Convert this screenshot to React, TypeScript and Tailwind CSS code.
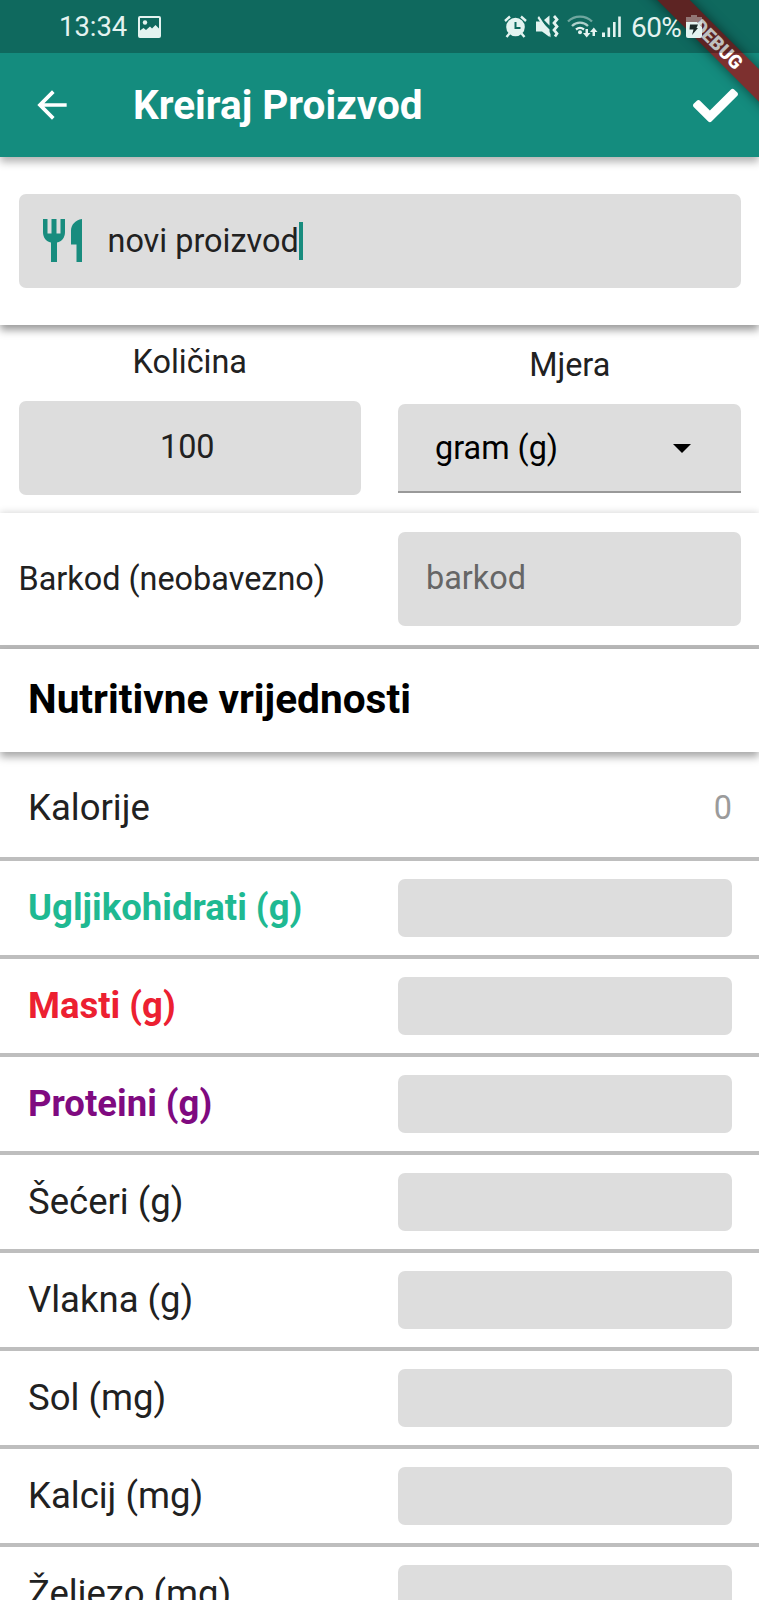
import React from "react";
import { MdArrowBack } from "react-icons/md";
import { FaCheck } from "react-icons/fa";

const nutrients = [
  { label: "Ugljikohidrati (g)", style: "font-bold text-[#1fb992]" },
  { label: "Masti (g)", style: "font-bold text-[#ec2031]" },
  { label: "Proteini (g)", style: "font-bold text-[#7f0a80]" },
  { label: "Šećeri (g)", style: "text-[#212121]" },
  { label: "Vlakna (g)", style: "text-[#212121]" },
  { label: "Sol (mg)", style: "text-[#212121]" },
  { label: "Kalcij (mg)", style: "text-[#212121]" },
  { label: "Željezo (mg)", style: "text-[#212121]" },
];

function StatusBar() {
  return (
    <div className="relative z-30 flex h-[53px] items-center bg-black/25 text-[#e4f3f0]">
      <span className="ml-[59px] w-[69px] pt-[2px] text-[27.4px] leading-none">13:34</span>
      <svg className="ml-[10px] shrink-0" width="23" height="22" viewBox="0 0 23 22">
        <path fill="currentColor" fillRule="evenodd" d="M2 0h19a2 2 0 0 1 2 2v18a2 2 0 0 1-2 2H2a2 2 0 0 1-2-2V2a2 2 0 0 1 2-2Zm0 2v12.500l3.500-2.500 2.500 2 4-3.500 2 2 3.500-3.500 3.500 3.500V2Z" />
        <circle cx="7" cy="6.500" r="2.200" fill="currentColor" />
      </svg>
      <svg className="ml-[343px] shrink-0" width="128" height="26" viewBox="0 0 128 26">
        <circle cx="11.5" cy="13" r="9.3" fill="currentColor" />
        <path fill="none" stroke="currentColor" strokeWidth="2.4" d="M1 7 6 2.500M22 7 17 2.500M5.500 19.500 2.500 23M17.500 19.500l3 3.500" />
        <path fill="none" stroke="#0e695e" strokeWidth="2" d="M11.500 8v6h5" />
        <path fill="currentColor" d="M32 7.500h5.500l8 8V23L38 17.500h-6ZM40 6l5.500-4.500V11.500Z" />
        <path fill="currentColor" d="m35 2 11.500 18v3.500L33.500 4Z" />
        <path fill="none" stroke="currentColor" strokeWidth="2.700" d="m50 2 3 3.500-3 3.500 3 3.500-3 3.500 3 3.500-2 3" />
        <g fill="none" stroke="currentColor" strokeWidth="2.300">
          <path opacity=".45" d="M64 7.500C70.500 1 81.500 1 88 7.500" />
          <path opacity=".75" d="M68 12c4.500-4.500 11.500-4.500 16 0" />
          <path d="M72 15.500c2.500-2 5.500-2 8 0" />
        </g>
        <circle cx="76" cy="18.300" r="2" fill="currentColor" />
        <path fill="currentColor" d="M81.500 15h2.500v4h2.500l-3.800 4.500L79 19h2.500ZM88.500 22H91v-4h2.500L89.800 13.500 86 18h2.500Z" />
        <path fill="currentColor" d="M98 18.500h3V23h-3ZM103.500 13.500h2.600V23h-2.600ZM109 8h2.600v15H109ZM114.200 2.500h2.600V23h-2.600Z" />
      </svg>
      <span className="-ml-[1px] w-[55px] pt-[2px] text-[28px] leading-none tracking-[-0.6px]">60%</span>
      <svg className="shrink-0" width="17" height="24" viewBox="0 0 17 24">
        <path fill="currentColor" opacity=".4" d="M5 0h6v2h5v5H0V2h5Z" />
        <path fill="currentColor" d="M0 7h11l5 5v9a2 2 0 0 1-2 2H2a2 2 0 0 1-2-2Z" />
        <path fill="currentColor" opacity=".6" d="M11 7h5v5Z" />
        <path fill="#1c2b29" d="M4 9.500h8l-1.500 3.500H12l-6 7 1.500-5.500H3.500Z" />
      </svg>
    </div>
  );
}

function DebugRibbon() {
  return (
    <div className="absolute left-[618px] top-[33px] z-20 h-[23px] w-[200px] rotate-45 bg-[#7d302f] text-center text-[19px] font-black leading-[23px] text-white shadow-[0_0_12px_rgba(0,0,0,0.5)]">
      DEBUG
    </div>
  );
}

function Cutlery() {
  return (
    <svg width="40" height="44" viewBox="0 0 40 44" className="text-[#188c7e]">
      <path fill="currentColor" d="M0 0h4.500v14.500h4V0h5v14.500h4V0H22v13c0 5.500-3 9.500-8 10.500V43H8V23.500C3 22.500 0 18.500 0 13ZM39 0v43h-5.500V25.500H28V12C28 6 32 1 39 0Z" />
    </svg>
  );
}

export default function App() {
  return (
    <div className="h-[1600px] w-[759px] overflow-hidden bg-white font-[Roboto,sans-serif] text-[#212121]">
      <header className="relative z-20 h-[157px] bg-[#148c7e] shadow-[0_5px_8px_rgba(0,0,0,0.3)]">
        <DebugRibbon />
        <StatusBar />
        <div className="flex h-[104px] items-center pl-[30px] pr-[21px] text-white">
          <MdArrowBack size={44} />
          <h1 className="ml-[59px] flex-1 text-[40.5px] font-bold">Kreiraj Proizvod</h1>
          <FaCheck size={45} />
        </div>
      </header>
      <section className="relative z-10 h-[168px] bg-white px-[18.5px] pt-[37px] shadow-[0_5px_8px_rgba(0,0,0,0.4)]">
        <div className="flex h-[94px] items-center rounded-[7px] bg-[#ddd] pl-[24.5px] text-[32.4px]">
          <Cutlery />
          <span className="ml-[24.5px]">novi proizvod</span>
          <span className="h-[38px] w-[4px] bg-[#188c7e]" />
        </div>
      </section>
      <section className="flex h-[188px] gap-[37px] px-[18.5px] text-[32.4px]">
        <div className="flex-1 pt-[13px] text-center">
          <div className="h-[63px]">Količina</div>
          <div className="h-[94px] rounded-[7px] bg-[#ddd] pr-[5px] leading-[92px]">100</div>
        </div>
        <div className="flex-1 pt-[16px]">
          <div className="h-[63px] pl-[1px] text-center">Mjera</div>
          <div className="flex h-[89px] items-center justify-between rounded-t-[7px] border-b-2 border-[#999] bg-[#ddd] pl-[37px] pr-[50px] pt-[2px] text-black">
            <span>gram (g)</span>
            <svg width="18" height="9" viewBox="0 0 18 9"><path d="M0 0h18L9 9Z" /></svg>
          </div>
        </div>
      </section>
      <section className="flex h-[136px] items-center justify-between border-b-4 border-[#b9b9b9] px-[18.5px] text-[32.4px] shadow-[0_-1px_7px_rgba(0,0,0,0.15)]">
        <span>Barkod (neobavezno)</span>
        <div className="h-[94px] w-[343px] rounded-[7px] bg-[#ddd] pl-[28.5px] leading-[92px] text-[#666]">barkod</div>
      </section>
      <section className="relative z-10 flex h-[103px] items-center bg-white pb-[2px] pl-[28px] text-[40.6px] font-bold text-black shadow-[0_5px_8px_rgba(0,0,0,0.35)]">
        Nutritivne vrijednosti
      </section>
      <div className="flex h-[109px] items-center justify-between border-b-4 border-[#bebebe] pl-[28px] pr-[27px] pt-[8px] text-[36.5px]">
        <span>Kalorije</span>
        <span className="text-[32.4px] text-[#9b9b9b]">0</span>
      </div>
      {nutrients.map((n) => (
        <div key={n.label} className="flex h-[98px] items-center border-b-4 border-[#bebebe] pl-[28px] pr-[27px] text-[36.5px]">
          <span className={"w-[370px] " + n.style}>{n.label}</span>
          <div className="h-[58px] flex-1 rounded-[7px] bg-[#ddd]" />
        </div>
      ))}
    </div>
  );
}
